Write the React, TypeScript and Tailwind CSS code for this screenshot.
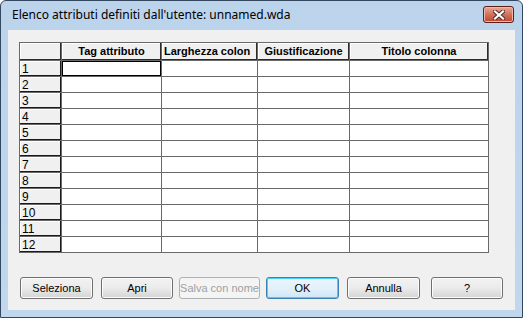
const rows = Array.from({ length: 12 }, (_, i) => i + 1);

function HeadCell({ label, center }: { label: string; center?: boolean }) {
  return (
    <div
      className={`flex h-[18px] items-center overflow-hidden whitespace-nowrap border-b border-r border-[#696969] bg-[#f0f0f0] text-[11px] font-bold text-black shadow-[inset_-1px_-1px_0_#2b2b2b,inset_1px_1px_0_#ffffff] ${
        center ? "justify-center" : "justify-start pl-[2px]"
      }`}
    >
      {label}
    </div>
  );
}

function Btn({ label, w, ml, variant }: { label: string; w: string; ml: string; variant?: "ok" | "off" }) {
  if (variant === "off") {
    return (
      <div className={`${w} ${ml} flex h-[22px] items-center justify-center rounded-[3px] border border-[#adb2b5] bg-[#f4f4f4] text-[11px] text-[#a0a0a0]`}>
        {label}
      </div>
    );
  }
  if (variant === "ok") {
    return (
      <div className={`${w} ${ml} flex h-[22px] items-center justify-center rounded-[3px] border border-[#3c7fb1] bg-gradient-to-b from-[#eaf6fd] via-[#e3f1fb] to-[#cfe6f6] text-[11px] text-black shadow-[inset_0_0_0_1px_#48d0fb]`}>
        {label}
      </div>
    );
  }
  return (
    <div className={`${w} ${ml} flex h-[22px] items-center justify-center rounded-[3px] border border-[#707070] bg-gradient-to-b from-[#f2f2f2] via-[#ebebeb] to-[#d4d4d4] text-[11px] text-black shadow-[inset_0_0_0_1px_#fcfcfc]`}>
      {label}
    </div>
  );
}

export default function App() {
  return (
    <div className="flex h-[318px] w-[523px] flex-col rounded-t-[6px] border border-[#33475e] bg-gradient-to-b from-[#bcd3ec] to-[#c1d7ee] font-['Liberation_Sans',Arial,sans-serif]">
      {/* title bar */}
      <div className="flex h-[29px] items-center justify-between pl-[11px] pr-[8px]">
        <span className="pb-[1px] font-['Noto_Sans',sans-serif] text-[12px] text-black">
          Elenco attributi definiti dall'utente: unnamed.wda
        </span>
        <div className="mb-[2px] flex h-[17px] w-[31px] items-center justify-center rounded-[3px] border border-[#5d1f16] bg-gradient-to-b from-[#e9a996] via-[#d2725c] to-[#c2432e] shadow-[inset_0_0_0_1px_#f0b8a8]">
          <svg width="12" height="10" viewBox="0 0 12 10">
            <path d="M2 1.5 L10 8.5 M10 1.5 L2 8.5" stroke="#4a2a26" strokeWidth="4" strokeLinecap="square" />
            <path d="M2 1.5 L10 8.5 M10 1.5 L2 8.5" stroke="#ffffff" strokeWidth="2.2" strokeLinecap="square" />
          </svg>
        </div>
      </div>

      {/* client area */}
      <div className="mx-[7px] mb-[7px] flex flex-1 flex-col bg-[#f0f0f0]">
        <div className="ml-[11px] mt-[12px] grid w-[470px] grid-cols-[42px_100px_96px_92px_139px] border-l border-t border-[#696969]">
          <HeadCell label="" />
          <HeadCell label="Tag attributo" center />
          <HeadCell label="Larghezza colon" />
          <HeadCell label="Giustificazione" center />
          <HeadCell label="Titolo colonna" center />
          {rows.map((r) => (
            <div key={r} className="contents">
              <div className="flex h-[16px] items-center border-b border-r border-[#696969] bg-[#f0f0f0] pl-[2px] text-[12px] text-black shadow-[inset_-1px_-1px_0_#1a1a1a,inset_1px_1px_0_#ffffff]">
                {r}
              </div>
              <div
                className={`h-[16px] border-b border-r border-[#696969] bg-white ${
                  r === 1 ? "shadow-[inset_0_0_0_1px_#000000]" : ""
                }`}
              />
              <div className="h-[16px] border-b border-r border-[#696969] bg-white" />
              <div className="h-[16px] border-b border-r border-[#696969] bg-white" />
              <div className="h-[16px] border-b border-r border-[#696969] bg-white" />
            </div>
          ))}
        </div>

        <div className="mt-[24px] flex pl-[12px]">
          <Btn label="Seleziona" w="w-[73px]" ml="ml-0" />
          <Btn label="Apri" w="w-[72px]" ml="ml-[8px]" />
          <Btn label="Salva con nome" w="w-[81px]" ml="ml-[6px]" variant="off" />
          <Btn label="OK" w="w-[73px]" ml="ml-[6px]" variant="ok" />
          <Btn label="Annulla" w="w-[73px]" ml="ml-[8px]" />
          <Btn label="?" w="w-[72px]" ml="ml-[11px]" />
        </div>
      </div>
    </div>
  );
}
